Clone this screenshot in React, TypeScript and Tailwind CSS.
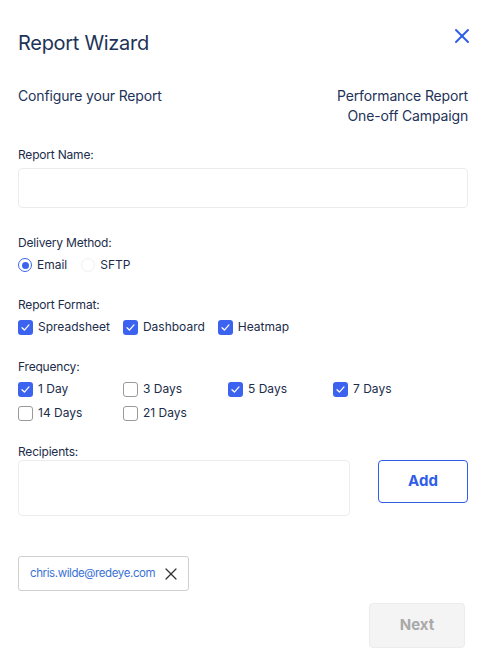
import { X } from "lucide-react";

const font = { fontFamily: "Inter, 'Noto Sans', sans-serif" };

function Check({ label, checked }: { label: string; checked?: boolean }) {
  return (
    <label className="flex items-center gap-[5px] h-[18px] text-[12px] text-[#1c2d4a]">
      {checked ? (
        <span className="w-[15px] h-[15px] rounded-[3px] bg-[#3b63f0] flex items-center justify-center">
          <svg width="11" height="11" viewBox="0 0 12 12" fill="none">
            <path d="M2.2 6.3 4.8 8.8 9.8 3.2" stroke="white" strokeWidth="1.4" strokeLinecap="round" strokeLinejoin="round" />
          </svg>
        </span>
      ) : (
        <span className="w-[15px] h-[15px] rounded-[3px] border border-[#9a9a9a] bg-white" />
      )}
      {label}
    </label>
  );
}

function Label({ children }: { children: React.ReactNode }) {
  return <p className="text-[12px] leading-[14px] text-[#1c2d4a] tracking-[-0.2px]">{children}</p>;
}

export default function App() {
  return (
    <div className="w-[486px] h-[655px] bg-white px-[18px]" style={font}>
      <div className="flex items-center justify-between pt-[31px]">
        <h1 className="text-[20px] text-[#1d3358] tracking-[-0.3px] leading-[24px]">Report Wizard</h1>
        <X size={24} strokeWidth={2} className="text-[#2f5de8] -mt-[14px] -mr-[6px]" />
      </div>

      <div className="flex justify-between mt-[31px] text-[14px] text-[#1d3358] leading-[20px] tracking-[-0.15px]">
        <p>Configure your Report</p>
        <div className="text-right">
          <p>Performance Report</p>
          <p>One-off Campaign</p>
        </div>
      </div>

      <div className="mt-[22px]">
        <Label>Report Name:</Label>
        <div className="mt-[6px] h-[40px] border border-[#ececec] rounded-[4px]" />
      </div>

      <div className="mt-[28px]">
        <Label>Delivery Method:</Label>
        <div className="flex items-center gap-[14px] mt-[6px] h-[18px] text-[12px] text-[#1c2d4a]">
          <label className="flex items-center gap-[5px]">
            <span className="w-[14px] h-[14px] rounded-full border-[1.5px] border-[#3b63f0] flex items-center justify-center">
              <span className="w-[7px] h-[7px] rounded-full bg-[#3b63f0]" />
            </span>
            Email
          </label>
          <label className="flex items-center gap-[5px]">
            <span className="w-[14px] h-[14px] rounded-full border border-[#f0f0f0]" />
            SFTP
          </label>
        </div>
      </div>

      <div className="mt-[24px]">
        <Label>Report Format:</Label>
        <div className="flex items-center gap-[13px] mt-[6px]">
          <Check label="Spreadsheet" checked />
          <Check label="Dashboard" checked />
          <Check label="Heatmap" checked />
        </div>
      </div>

      <div className="mt-[24px]">
        <Label>Frequency:</Label>
        <div className="grid grid-cols-[105px_105px_105px_105px] gap-y-[6px] mt-[6px]">
          <Check label="1 Day" checked />
          <Check label="3 Days" />
          <Check label="5 Days" checked />
          <Check label="7 Days" checked />
          <Check label="14 Days" />
          <Check label="21 Days" />
        </div>
      </div>

      <div className="mt-[23px]">
        <Label>Recipients:</Label>
        <div className="flex items-start justify-between mt-[1px]">
          <div className="w-[332px] h-[56px] border border-[#ececec] rounded-[4px]" />
          <button className="w-[90px] h-[43px] border border-[#2f5de8] rounded-[4px] text-[15px] font-bold text-[#2f5de8]">
            Add
          </button>
        </div>
      </div>

      <div className="mt-[40px] inline-flex items-center gap-[6px] h-[35px] pl-[11px] pr-[7px] border border-[#cfcfcf] rounded-[3px]">
        <span className="text-[11.5px] text-[#3a72d6] tracking-[-0.4px]">chris.wilde@redeye.com</span>
        <X size={20} strokeWidth={1.5} className="text-[#333]" />
      </div>

      <div className="flex justify-end mt-[12px] pr-[3px]">
        <button className="w-[96px] h-[45px] bg-[#f4f4f4] border border-[#ececec] rounded-[4px] text-[15px] font-bold text-[#a9a9a9]">
          Next
        </button>
      </div>
    </div>
  );
}
